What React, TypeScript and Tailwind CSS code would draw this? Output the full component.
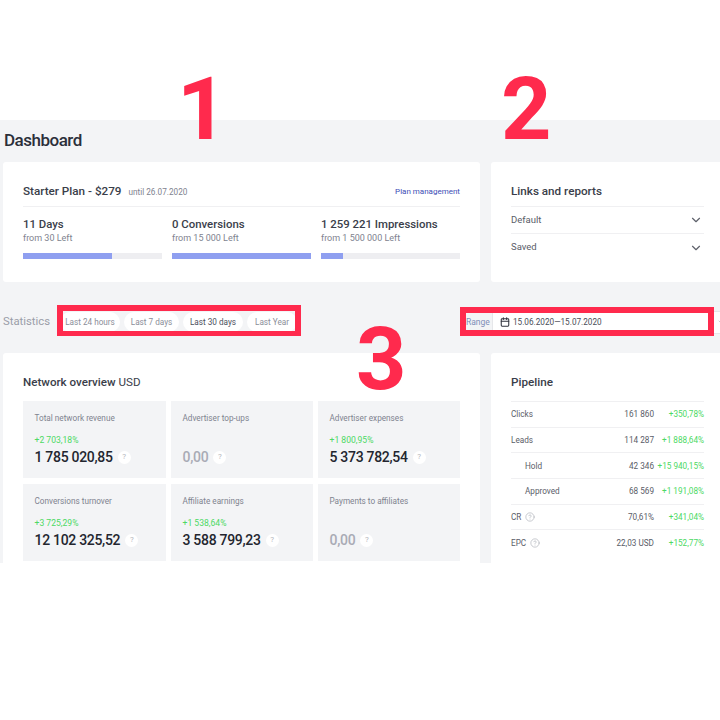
import { Calendar, ChevronDown, CircleHelp } from "lucide-react";

const plan = [
  { title: "11 Days", sub: "from 30 Left", fill: "w-[64%]" },
  { title: "0 Conversions", sub: "from 15 000 Left", fill: "w-full" },
  { title: "1 259 221 Impressions", sub: "from 1 500 000 Left", fill: "w-[16%]" },
];

const overview = [
  { label: "Total network revenue", delta: "+2 703,18%", value: "1 785 020,85" },
  { label: "Advertiser top-ups", delta: "", value: "0,00" },
  { label: "Advertiser expenses", delta: "+1 800,95%", value: "5 373 782,54" },
  { label: "Conversions turnover", delta: "+3 725,29%", value: "12 102 325,52" },
  { label: "Affiliate earnings", delta: "+1 538,64%", value: "3 588 799,23" },
  { label: "Payments to affiliates", delta: "", value: "0,00" },
];

const pipeline = [
  { label: "Clicks", value: "161 860", delta: "+350,78%" },
  { label: "Leads", value: "114 287", delta: "+1 888,64%" },
  { label: "Hold", value: "42 346", delta: "+15 940,15%", indent: true },
  { label: "Approved", value: "68 569", delta: "+1 191,08%", indent: true },
  { label: "CR", value: "70,61%", delta: "+341,04%", help: true },
  { label: "EPC", value: "22,03 USD", delta: "+152,77%", help: true },
];

const periods = [
  { label: "Last 24 hours", cls: "w-[60px] text-[#8b8e99]" },
  { label: "Last 7 days", cls: "w-[55px] text-[#8b8e99]" },
  { label: "Last 30 days", cls: "w-[60px] text-[#4b4f5c]" },
  { label: "Last Year", cls: "w-[50px] text-[#8b8e99]" },
];

export default function App() {
  return (
    <div className="relative h-[720px] w-[720px] overflow-hidden bg-white pt-[120px] font-['Roboto',sans-serif]">
      <div className="h-[443px] overflow-hidden bg-[#f3f4f6] pl-[3px]">
        <h1 className="pl-px pt-[8px] text-[17px] leading-[24px] font-medium tracking-[-0.5px] text-[#2b2f3a]">Dashboard</h1>

        <div className="mt-[10px] grid grid-cols-[477px_240px] gap-x-[11px]">
          <div className="h-[120px] rounded-[3px] bg-white px-5 pt-[18px]">
            <div className="flex h-[27px] items-center border-b border-[#f0f0f2] pb-[2px]">
              <span className="text-[11.7px] font-medium text-[#3a3e4a]">Starter Plan - $279</span>
              <span className="ml-[7px] text-[8.2px] text-[#80838f]">until 26.07.2020</span>
              <a className="ml-auto text-[8px] text-[#3d4db5]">Plan management</a>
            </div>
            <div className="mt-[10px] grid grid-cols-3 gap-x-[10px]">
              {plan.map((p) => (
                <div key={p.title}>
                  <div className="text-[11.4px] leading-[15px] font-medium text-[#3a3e4a]">{p.title}</div>
                  <div className="text-[9px] leading-[13px] text-[#80838f]">{p.sub}</div>
                  <div className="mt-[8px] h-[6px] bg-[#eeeef1]">
                    <div className={`h-full bg-[#8f9ff0] ${p.fill}`} />
                  </div>
                </div>
              ))}
            </div>
          </div>

          <div className="h-[120px] w-[229px] rounded-l-[3px] bg-white pl-5 pr-4 pt-[18px]">
            <div className="flex h-[27px] items-center border-b border-[#f0f0f2] pb-[2px] text-[11.7px] font-medium text-[#3a3e4a]">
              Links and reports
            </div>
            {["Default", "Saved"].map((name) => (
              <div key={name} className="flex h-[27px] items-center justify-between border-b border-[#f0f0f2] pr-px last:border-b-0 text-[9.5px] text-[#5a5d68]">
                {name}
                <ChevronDown className="h-[14px] w-[14px] text-[#5f626c]" strokeWidth={2} />
              </div>
            ))}
          </div>
        </div>

        <div className="mt-[29px] flex h-[22px] items-center whitespace-nowrap">
          <span className="w-[54px] shrink-0 text-[11.3px] text-[#9a9da8]">Statistics</span>
          <div className="ml-[3px] flex shrink-0 gap-[4px]">
            {periods.map((p) => (
              <button key={p.label} className={`h-5 rounded-full bg-white text-center text-[8.2px] ${p.cls}`}>
                {p.label}
              </button>
            ))}
          </div>
          <div className="ml-[169px] flex h-[23px] w-[260px] shrink-0 items-center">
            <span className="w-[26px] shrink-0 text-[8.5px] text-[#7f8fb8]">Range</span>
            <div className="flex h-full flex-1 items-center gap-[3px] border border-[#e6e7ea] bg-white pl-[7px] text-[8.2px] text-[#4a4d58]">
              <Calendar className="h-[10px] w-[10px] text-[#2f323c]" strokeWidth={2.5} />
              15.06.2020—15.07.2020
              <ChevronDown className="ml-auto h-2 w-2 text-[#b0b2ba]" />
            </div>
          </div>
        </div>

        <div className="mt-[20px] grid grid-cols-[477px_240px] gap-x-[11px]">
          <div className="h-[220px] rounded-t-[3px] bg-white px-5 pt-[21px]">
            <div className="text-[11.6px] leading-[16px] font-medium text-[#3a3e4a]">
              Network overview <span className="font-normal">USD</span>
            </div>
            <div className="mt-[11px] grid grid-cols-[143px_142px_142px] gap-x-[5px] gap-y-[6px]">
              {overview.map((c) => (
                <div key={c.label} className="h-[77px] bg-[#f3f4f6] pl-[11.5px] pt-[11px]">
                  <div className="text-[8.2px] leading-[12px] text-[#80838f]">{c.label}</div>
                  <div className="mt-[10px] h-[13px] text-[8.6px] leading-[13px] text-[#4cd964]">{c.delta}</div>
                  <div className="flex h-[20px] items-center gap-[5px]">
                    <span className={`text-[14px] font-medium tracking-[-0.3px] ${c.delta ? "text-[#23262f]" : "text-[#a9abb5]"}`}>{c.value}</span>
                    <span className="flex h-[13px] w-[13px] items-center justify-center rounded-full bg-white text-[8px] text-[#b4b6bd]">?</span>
                  </div>
                </div>
              ))}
            </div>
          </div>

          <div className="h-[220px] w-[229px] rounded-l-[3px] bg-white pl-5 pr-4 pt-[21px]">
            <div className="h-[28px] border-b border-[#f0f0f2] text-[11.7px] leading-[16px] font-medium text-[#3a3e4a]">Pipeline</div>
            {pipeline.map((r) => (
              <div key={r.label} className="flex h-[25.7px] items-center border-b border-[#f0f0f2] last:border-b-0 text-[8.2px] whitespace-nowrap text-[#5a5d68]">
                <span className={`flex items-center gap-[4px] ${r.indent ? "pl-[14px]" : ""}`}>
                  {r.label}
                  {r.help && <CircleHelp className="h-[10px] w-[10px] text-[#a9abb3]" strokeWidth={1.5} />}
                </span>
                <span className="ml-auto">{r.value}</span>
                <span className="w-[50px] text-right text-[#4cd964]">{r.delta}</span>
              </div>
            ))}
          </div>
        </div>
      </div>

      {/* red annotations drawn on top of the screenshot */}
      <div className="absolute left-[57px] top-[305px] h-[31px] w-[244px] border-[6px] border-b-[5px] border-[#ff2a4d]" />
      <div className="absolute left-[460px] top-[307px] h-[29px] w-[254px] border-[6px] border-[#ff2a4d]" />
      <span className="absolute left-[177px] top-[59px] text-[88px] leading-[100px] font-bold text-[#ff2a4d]">1</span>
      <span className="absolute left-[501px] top-[59px] text-[88px] leading-[100px] font-bold text-[#ff2a4d]">2</span>
      <span className="absolute left-[356px] top-[309px] text-[88px] leading-[100px] font-bold text-[#ff2a4d]">3</span>
    </div>
  );
}
